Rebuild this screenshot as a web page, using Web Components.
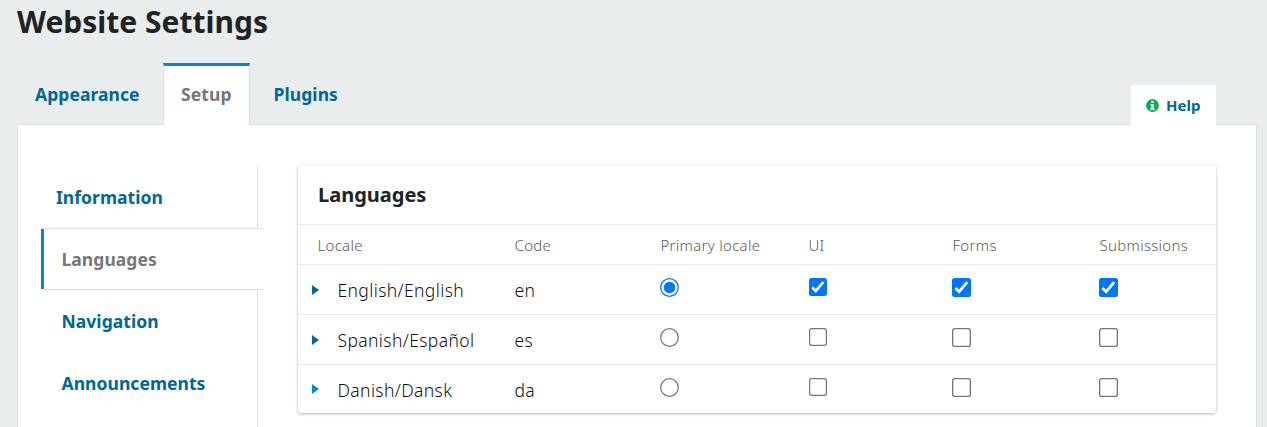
<!DOCTYPE html>
<html lang="en">
<head>
<meta charset="utf-8">
<title>Website Settings</title>
<style>
html,body{margin:0;height:100%;overflow:hidden;background:#e9edee;font-family:"Noto Sans",sans-serif;color:#222}
</style>
</head>
<body>
<settings-page></settings-page>
<script>
class Base extends HTMLElement{
  connectedCallback(){
    if(this.shadowRoot)return;
    this.attachShadow({mode:'open'}).innerHTML=this.render();
  }
}
customElements.define('settings-tab',class extends Base{
  render(){return `<style>
:host{display:block;box-sizing:border-box;height:62px;padding:0 17px;border:1px solid transparent;border-top:3px solid transparent;border-bottom:0;font-weight:700;font-size:17.5px;letter-spacing:.06px;line-height:56px;color:#006798;white-space:nowrap}
:host([selected]){background:#fff;color:#777;border-color:#008acb #ddd;width:87px}
</style><slot></slot>`}
});
customElements.define('help-button',class extends Base{
  render(){return `<style>
:host{display:flex;box-sizing:border-box;align-items:center;width:85px;height:40px;padding-left:14.5px;gap:7.5px;background:#fff;border-radius:2px 2px 0 0;font-weight:700;font-size:15px;line-height:40px;color:#006798}
svg{display:block}
</style><svg width="13" height="13" viewBox="0 0 13 13"><circle cx="6.5" cy="6.5" r="6.4" fill="#00b24e"/><path d="M5.2 1.8h2.4v2H5.2zM4.3 4.9h3.4v4.4h1v1.6H4.3V9.3h1V6.5h-1z" fill="#fff"/></svg><slot></slot>`}
});
customElements.define('side-tab',class extends Base{
  render(){return `<style>
:host{display:block;flex:none;box-sizing:border-box;width:217px;height:62px;padding-left:20.5px;border-right:1px solid #ddd;font-weight:700;font-size:17.5px;letter-spacing:.05px;line-height:62px;color:#006798}
:host([first]){padding-left:15px}
:host([selected]){display:flex;width:222px;padding:0;border:0;color:#777;line-height:60px}
i{display:none}
:host([selected]) i{display:block;width:3px;height:60px;margin-top:1px;background:#008acb}
:host([selected]) div{flex:1;height:60px;padding-left:17.5px;border-top:1px solid #ddd;border-bottom:1px solid #ddd;border-radius:2px 0 0 0;background:#fff}
</style><i></i><div><slot></slot></div>`}
});
customElements.define('form-mark',class extends Base{
  render(){
    const on=this.hasAttribute('checked'),s=this.hasAttribute('small')?18:19;
    let art;
    if(this.getAttribute('kind')==='radio') art=on
      ?'<circle cx="9.5" cy="9.5" r="8.8" fill="#fff" stroke="#0075ff" stroke-width="1.25"/><circle cx="9.5" cy="9.5" r="5.7" fill="#0075ff"/>'
      :'<circle cx="9.5" cy="9.5" r="8.8" fill="#fff" stroke="#767676" stroke-width="1.25"/>';
    else art=on
      ?'<rect width="19" height="19" rx="2.5" fill="#0075ff"/><path d="M3.5 10 7.1 13.7 15.2 4.2" fill="none" stroke="#fff" stroke-width="2.7"/>'
      :'<rect x=".65" y=".65" width="17.7" height="17.7" rx="2.2" fill="#fff" stroke="#767676" stroke-width="1.3"/>';
    return `<style>:host{display:block}svg{display:block}</style><svg width="${s}" height="${s}" viewBox="0 0 19 19">${art}</svg>`}
});
customElements.define('language-row',class extends Base{
  render(){
    const on=this.hasAttribute('on')?'checked':'';
    return `<style>
:host{display:grid;box-sizing:border-box;grid-template-columns:var(--cols);height:50px;border-bottom:1px solid #eaeaea;font-size:17.5px;font-weight:300;letter-spacing:.38px;line-height:51px;color:#111}
:host([last]){border-bottom:0;height:49px}
.name{display:flex;padding-left:14px}
svg{display:block;width:7px;height:10px;margin:20px 18.5px 0 0;fill:#006798}
:host([last]) svg{fill:#008acb;margin-top:19px}
.code{padding-left:19.5px}
form-mark{padding:13px 0 0 19px}
form-mark[small]{padding:13px 0 0 19.8px}
</style><div class="name"><svg viewBox="0 0 7 10"><path d="M0 0 7 5 0 10z"/></svg><slot></slot></div>
<div class="code">${this.getAttribute('code')}</div>
<form-mark kind="radio" ${on}></form-mark><form-mark small ${on}></form-mark><form-mark ${on}></form-mark><form-mark ${on}></form-mark>`}
});
customElements.define('language-table',class extends Base{
  render(){return `<style>
:host{--cols:197px 146px 148px 144px 147px 136px;display:block;width:918px;height:248px;background:#fff;border-radius:3px;box-shadow:0 1px 3px rgba(0,0,0,.3)}
h2{margin:0;box-sizing:border-box;height:60px;padding-left:20px;border-bottom:1px solid #eaeaea;font-size:20px;line-height:59px;font-weight:700}
.head{display:grid;box-sizing:border-box;grid-template-columns:var(--cols);height:40px;border-bottom:1px solid #eaeaea;font-size:15px;font-weight:300;letter-spacing:.28px;line-height:40px;color:#5c5c5c}
.head span{padding-left:19.5px;white-space:nowrap}
</style><h2>Languages</h2>
<div class="head"><span>Locale</span><span>Code</span><span>Primary locale</span><span>UI</span><span>Forms</span><span>Submissions</span></div>
<slot></slot>`}
});
customElements.define('settings-page',class extends Base{
  render(){return `<style>
:host{display:flex;flex-direction:column;height:427px;padding:0 10px 0 17px;overflow:hidden}
h1{flex:none;margin:0;font-size:30px;line-height:44px;height:63px;font-weight:700}
.tabs{flex:none;display:flex;align-items:flex-end;gap:5.5px;height:62px;position:relative;z-index:1;margin-bottom:-1px}
help-button{margin-left:auto;margin-right:41px}
.panel{flex:1;min-height:0;display:flex;align-items:flex-start;box-sizing:border-box;background:#fff;border:1px solid #ddd;border-bottom:0;border-radius:2px 2px 0 0;padding:40px 0 0 23px}
nav{align-self:stretch;display:flex;flex-direction:column;width:257px;padding-top:1px}
.rest{flex:1;width:216px;border-right:1px solid #ddd}
</style>
<h1>Website Settings</h1>
<div class="tabs"><settings-tab>Appearance</settings-tab><settings-tab selected>Setup</settings-tab><settings-tab>Plugins</settings-tab><help-button>Help</help-button></div>
<div class="panel">
<nav><side-tab first>Information</side-tab><side-tab selected>Languages</side-tab><side-tab>Navigation</side-tab><side-tab>Announcements</side-tab><div class="rest"></div></nav>
<language-table><language-row code="en" on>English/English</language-row><language-row code="es">Spanish/Español</language-row><language-row code="da" last>Danish/Dansk</language-row></language-table>
</div>`}
});
</script>
</body>
</html>
